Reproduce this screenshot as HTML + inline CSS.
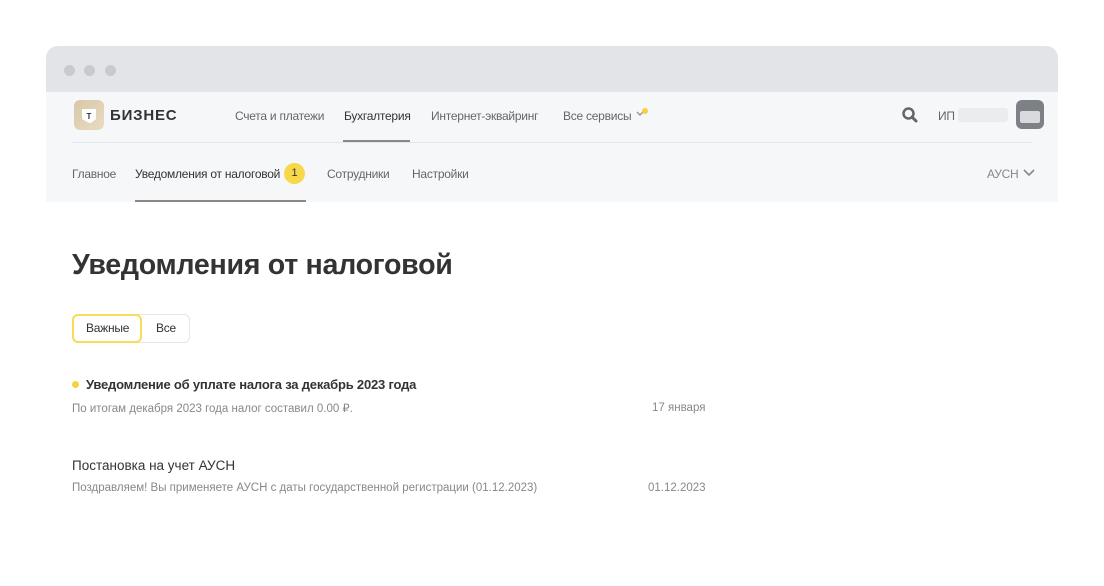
<!DOCTYPE html>
<html><head><meta charset="utf-8"><style>
*{margin:0;padding:0;box-sizing:border-box}
body{width:1104px;height:574px;background:#fff;font-family:"Liberation Sans",sans-serif;position:relative;overflow:hidden;color:#333}
.frame{position:absolute;left:46px;top:46px;width:1012px;height:540px;border-radius:12px 12px 0 0;background:#fff}
.title{position:absolute;left:0;top:0;width:1012px;height:46px;background:#e2e4e8;border-radius:12px 12px 0 0}
.dot{position:absolute;top:19px;width:11px;height:11px;border-radius:50%;background:#c8cad0}
.nav{position:absolute;left:0;top:46px;width:1012px;height:110px;background:#f6f7f8}
.t{position:absolute;font-size:12px;letter-spacing:-0.25px;white-space:nowrap}
.line{position:absolute;left:26px;right:26px;top:50px;height:1px;background:#e5e6e9}
</style></head><body>
<div class="frame">
<div class="title">
<div class="dot" style="left:18px"></div><div class="dot" style="left:38px"></div><div class="dot" style="left:59px"></div>
</div>
<div class="nav">
<div style="position:absolute;left:28px;top:8px;width:30px;height:30px;border-radius:6px;background:linear-gradient(135deg,#d9c7a6,#e9dcc4)"></div>
<svg style="position:absolute;left:34px;top:15px" width="18" height="18" viewBox="0 0 18 18"><path d="M2 2h14v10l-5 4h-2l-7-4z" fill="#fff"/><text x="9" y="12" font-size="8" font-weight="bold" text-anchor="middle" fill="#333" font-family="Liberation Sans">Т</text></svg>
<div class="t" style="left:64px;top:15px;font-size:15px;font-weight:bold;color:#333;letter-spacing:.8px">БИЗНЕС</div>
<div class="t" style="left:189px;top:17px;color:#666">Счета и платежи</div>
<div class="t" style="left:298px;top:17px;color:#333">Бухгалтерия</div>
<div style="position:absolute;left:297px;top:48px;width:67px;height:2px;background:#888"></div>
<div class="t" style="left:385px;top:17px;color:#666">Интернет-эквайринг</div>
<div class="t" style="left:517px;top:17px;color:#666">Все сервисы</div>
<svg style="position:absolute;left:590px;top:15px" width="14" height="12"><path d="M1 5l3 3 3-3" stroke="#999" stroke-width="1.5" fill="none"/><circle cx="9" cy="4" r="3" fill="#f7d23c"/></svg>
<svg style="position:absolute;left:855px;top:14px" width="18" height="18"><circle cx="7.5" cy="7.5" r="5" stroke="#666" stroke-width="2.5" fill="none"/><path d="M11 11l4 4" stroke="#666" stroke-width="3" stroke-linecap="round"/></svg>
<div class="t" style="left:892px;top:17px;color:#666">ИП</div>
<div style="position:absolute;left:912px;top:16px;width:50px;height:14px;background:#ebecee;border-radius:3px"></div>
<div style="position:absolute;left:970px;top:8px;width:28px;height:29px;border-radius:6px;background:#7d8085"></div>
<div style="position:absolute;left:974px;top:19px;width:20px;height:12px;border-radius:2px;background:#d8dadd"></div>
<div class="line"></div>
<div class="t" style="left:26px;top:75px;color:#666">Главное</div>
<div class="t" style="left:89px;top:75px;color:#333">Уведомления от налоговой</div>
<div style="position:absolute;left:238px;top:71px;width:21px;height:21px;border-radius:50%;background:#f7d84a;font-size:11px;text-align:center;line-height:21px;color:#333">1</div>
<div style="position:absolute;left:89px;top:108px;width:171px;height:2px;background:#888"></div>
<div class="t" style="left:281px;top:75px;color:#666">Сотрудники</div>
<div class="t" style="left:366px;top:75px;color:#666">Настройки</div>
<div class="t" style="left:941px;top:75px;color:#888">АУСН</div>
<svg style="position:absolute;left:977px;top:76px" width="12" height="10"><path d="M1 2l5 5 5-5" stroke="#888" stroke-width="1.6" fill="none"/></svg>
</div>
</div>
<div class="t" style="left:72px;top:249px;font-size:28.6px;font-weight:bold;color:#333;letter-spacing:-.3px">Уведомления от налоговой</div>
<div style="position:absolute;left:72px;top:314px;width:118px;height:29px;border:1px solid #e6e6e6;border-radius:6px"></div>
<div style="position:absolute;left:72px;top:314px;width:70px;height:29px;border:2px solid #f7dc5a;border-radius:6px"></div>
<div class="t" style="left:86px;top:321px;color:#333">Важные</div>
<div class="t" style="left:156px;top:321px;color:#333">Все</div>
<div style="position:absolute;left:72px;top:381px;width:7px;height:7px;border-radius:50%;background:#f7d23c"></div>
<div class="t" style="left:86px;top:377px;font-size:13px;font-weight:bold;color:#333;letter-spacing:-0.2px">Уведомление об уплате налога за декабрь 2023 года</div>
<div class="t" style="left:72px;top:401px;font-size:11.5px;letter-spacing:0;color:#888">По итогам декабря 2023 года налог составил 0.00 ₽.</div>
<div class="t" style="left:652px;top:402px;font-size:11.5px;letter-spacing:0;color:#888">17 января</div>
<div class="t" style="left:72px;top:458px;font-size:13.5px;letter-spacing:0;color:#333">Постановка на учет АУСН</div>
<div class="t" style="left:72px;top:482px;font-size:11.5px;letter-spacing:0;color:#888">Поздравляем! Вы применяете АУСН с даты государственной регистрации (01.12.2023)</div>
<div class="t" style="left:648px;top:482px;font-size:11.5px;letter-spacing:0;color:#888">01.12.2023</div>
</body></html>
